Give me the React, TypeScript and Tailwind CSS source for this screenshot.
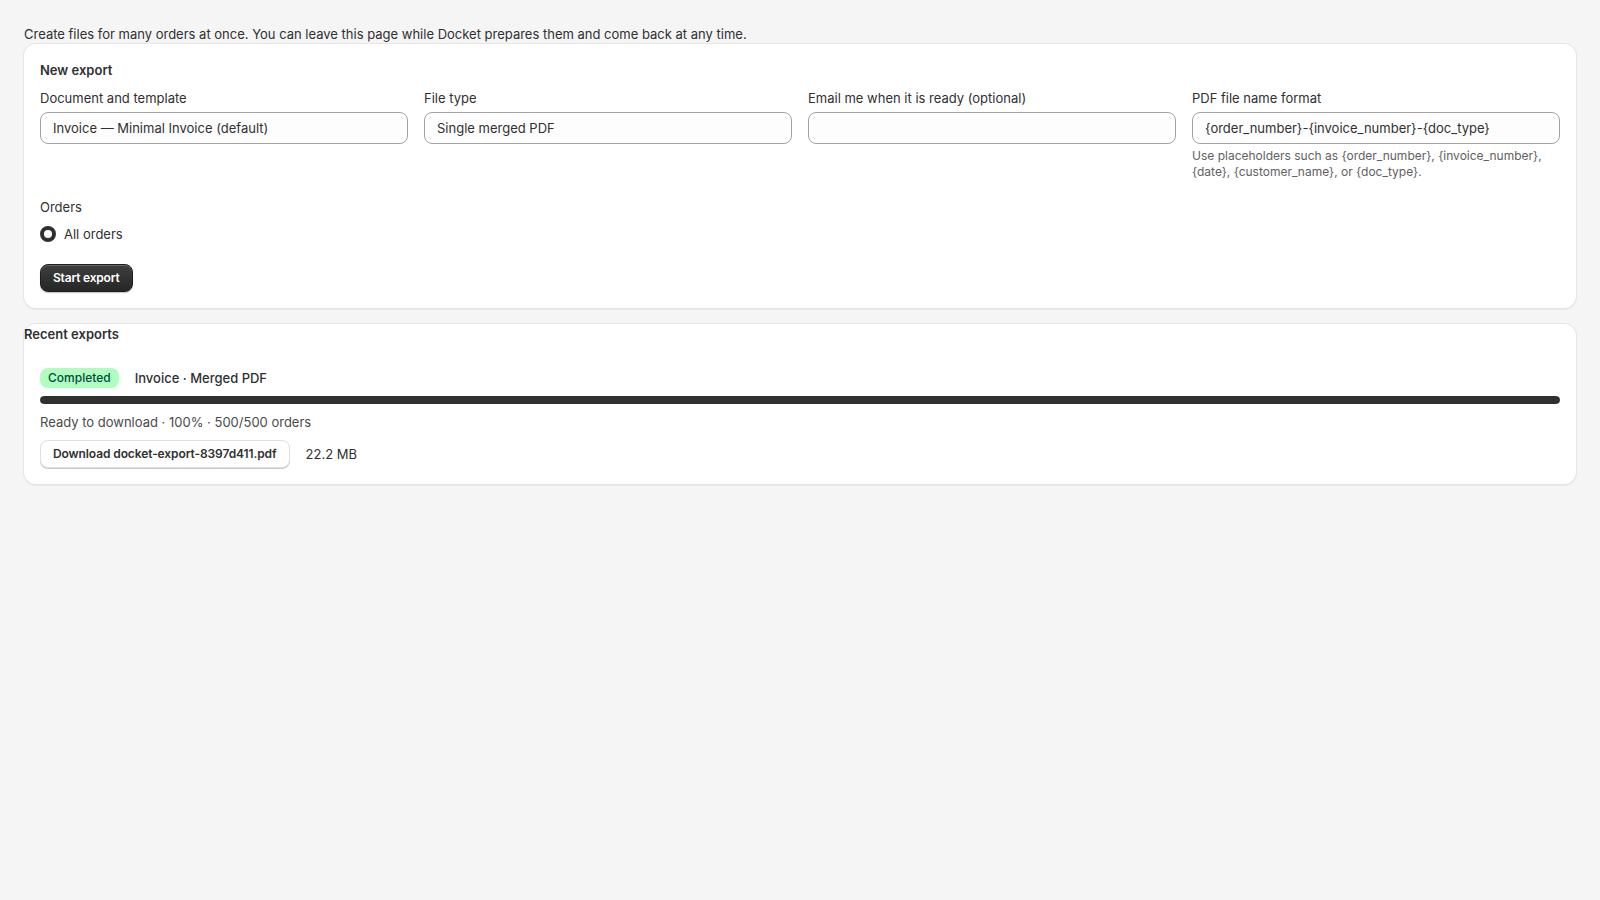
import { useState } from "react";

type Field = {
  label: string;
  value: string;
  help?: string;
};

const fields: Field[] = [
  { label: "Document and template", value: "Invoice — Minimal Invoice (default)" },
  { label: "File type", value: "Single merged PDF" },
  { label: "Email me when it is ready (optional)", value: "" },
  {
    label: "PDF file name format",
    value: "{order_number}-{invoice_number}-{doc_type}",
    help: "Use placeholders such as {order_number}, {invoice_number}, {date}, {customer_name}, or {doc_type}.",
  },
];

// border drawn as a ring so it doesn't add to the card height
const cardClass =
  "bg-white rounded-xl shadow-[0_0_0_1px_#e6e6e6,0_1px_0_1px_rgba(26,26,26,0.06)]";

const BulkExportPage = () => {
  const [values, setValues] = useState(fields.map((f) => f.value));
  const progress = 100;

  return (
    <div
      className="min-h-screen bg-[#f5f5f5] px-6 pt-6 text-[#303030]"
      style={{ fontFamily: "Inter, 'Noto Sans', sans-serif" }}
    >
      <p className="text-[13px] leading-5">
        Create files for many orders at once. You can leave this page while Docket prepares them and come back at any time.
      </p>

      {/* new export form */}
      <div className={`${cardClass} p-4`}>
        <h2 className="text-[13px] leading-5 font-semibold">New export</h2>

        <div className="mt-2 grid grid-cols-4 gap-4">
          {fields.map((field, i) => (
            <div key={field.label} className="flex flex-col">
              <label className="text-[13px] leading-5">{field.label}</label>
              <input
                value={values[i]}
                onChange={(e) =>
                  setValues((prev) => prev.map((v, j) => (j === i ? e.target.value : v)))
                }
                className="mt-1 h-8 w-full rounded-lg border border-[#a3a3a3] bg-[#fdfdfd] px-3 text-[13px] text-[#303030] outline-none"
              />
              {field.help && (
                <p className="mt-1 text-xs leading-4 text-[#616161]">{field.help}</p>
              )}
            </div>
          ))}
        </div>

        <div className="mt-[17px] text-[13px] leading-5">Orders</div>
        <label className="mt-[7px] flex items-center gap-2 text-[13px] leading-5">
          <span className="h-4 w-4 rounded-full border-[4.5px] border-[#303030] bg-white" />
          All orders
        </label>

        <button className="mt-5 h-7 rounded-lg border border-[#1e1e1e] bg-gradient-to-b from-[#3f3f3f] to-[#262626] px-3 text-xs font-semibold tracking-[-0.2px] text-white shadow-[inset_0_1px_0_rgba(255,255,255,0.22),0_1px_1px_rgba(0,0,0,0.25)]">
          Start export
        </button>
      </div>

      {/* export history */}
      <div className={`${cardClass} mt-4 pb-4`}>
        <h2 className="text-[13px] leading-5 font-semibold">Recent exports</h2>

        <div className="px-4 pt-6">
          <div className="flex items-center gap-4">
            <span className="inline-flex h-5 items-center rounded-lg bg-[#affebf] px-2 text-xs font-medium text-[#014b40]">
              Completed
            </span>
            <span className="text-[13px] leading-5 font-medium">Invoice · Merged PDF</span>
          </div>

          <div className="mt-2 h-2 w-full overflow-hidden rounded-full bg-[#e3e3e3]">
            <div className="h-full rounded-full bg-[#303030]" style={{ width: `${progress}%` }} />
          </div>

          <p className="mt-2 text-[13px] leading-5 text-[#4a4a4a]">
            Ready to download · 100% · 500/500 orders
          </p>

          <div className="mt-2 flex items-center gap-4">
            <button className="h-7 rounded-lg border border-[#e0e0e0] bg-white px-3 text-xs font-semibold tracking-[-0.1px] text-[#303030] shadow-[0_1px_0_0_#c9c9c9]">
              Download docket-export-8397d411.pdf
            </button>
            <span className="text-[13px] leading-5">22.2 MB</span>
          </div>
        </div>
      </div>
    </div>
  );
};

export default function App() {
  return <BulkExportPage />;
}
